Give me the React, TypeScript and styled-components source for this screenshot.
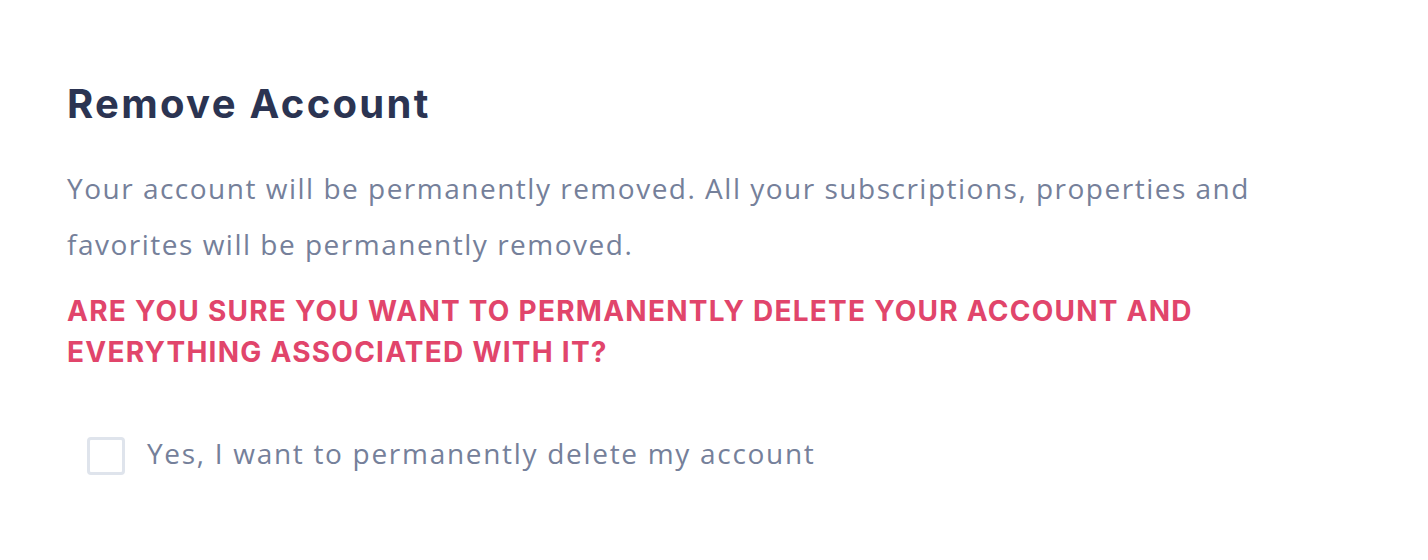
import React from "react";
import styled, { createGlobalStyle } from "styled-components";

const Global = createGlobalStyle`
  html, body { margin: 0; padding: 0; background: #ffffff; }
  * { box-sizing: border-box; }
`;

const Page = styled.div`
  padding: 80px 67px 0 67px;
  display: flex;
  flex-direction: column;
  align-items: flex-start;
`;

const Title = styled.h2`
  margin: 0;
  font-family: Inter, "Noto Sans", sans-serif;
  font-weight: 700;
  font-size: 40px;
  line-height: 48px;
  color: #2b3452;
  letter-spacing: 2.3px;
`;

const Description = styled.p`
  margin: 32px 0 0 0;
  width: 1230px;
  font-family: "Open Sans", Lato, sans-serif;
  font-weight: 400;
  font-size: 28px;
  line-height: 56px;
  letter-spacing: 1.5px;
  color: #75809a;
`;

const Warning = styled.p`
  margin: 19px 0 0 0;
  width: 1180px;
  font-family: Inter, "Noto Sans", sans-serif;
  font-weight: 700;
  font-size: 28px;
  line-height: 41px;
  letter-spacing: 1.25px;
  color: #e1456b;
  text-transform: uppercase;
`;

const CheckRow = styled.label`
  margin: 64px 0 0 20px;
  display: flex;
  align-items: center;
  gap: 22px;
  cursor: pointer;
`;

const Box = styled.span`
  width: 38px;
  height: 38px;
  border: 3px solid #dfe4ec;
  border-radius: 4px;
  background: #fff;
  flex: none;
`;

const CheckText = styled.span`
  padding-bottom: 6px;
  font-family: "Open Sans", Lato, sans-serif;
  font-size: 28px;
  line-height: 32px;
  letter-spacing: 1.7px;
  color: #75809a;
`;

export default function App() {
  return (
    <>
      <Global />
      <Page>
        <Title>Remove Account</Title>
        <Description>
          Your account will be permanently removed. All your subscriptions, properties and favorites will be permanently removed.
        </Description>
        <Warning>Are you sure you want to permanently delete your account and everything associated with it?</Warning>
        <CheckRow>
          <Box />
          <CheckText>Yes, I want to permanently delete my account</CheckText>
        </CheckRow>
      </Page>
    </>
  );
}
